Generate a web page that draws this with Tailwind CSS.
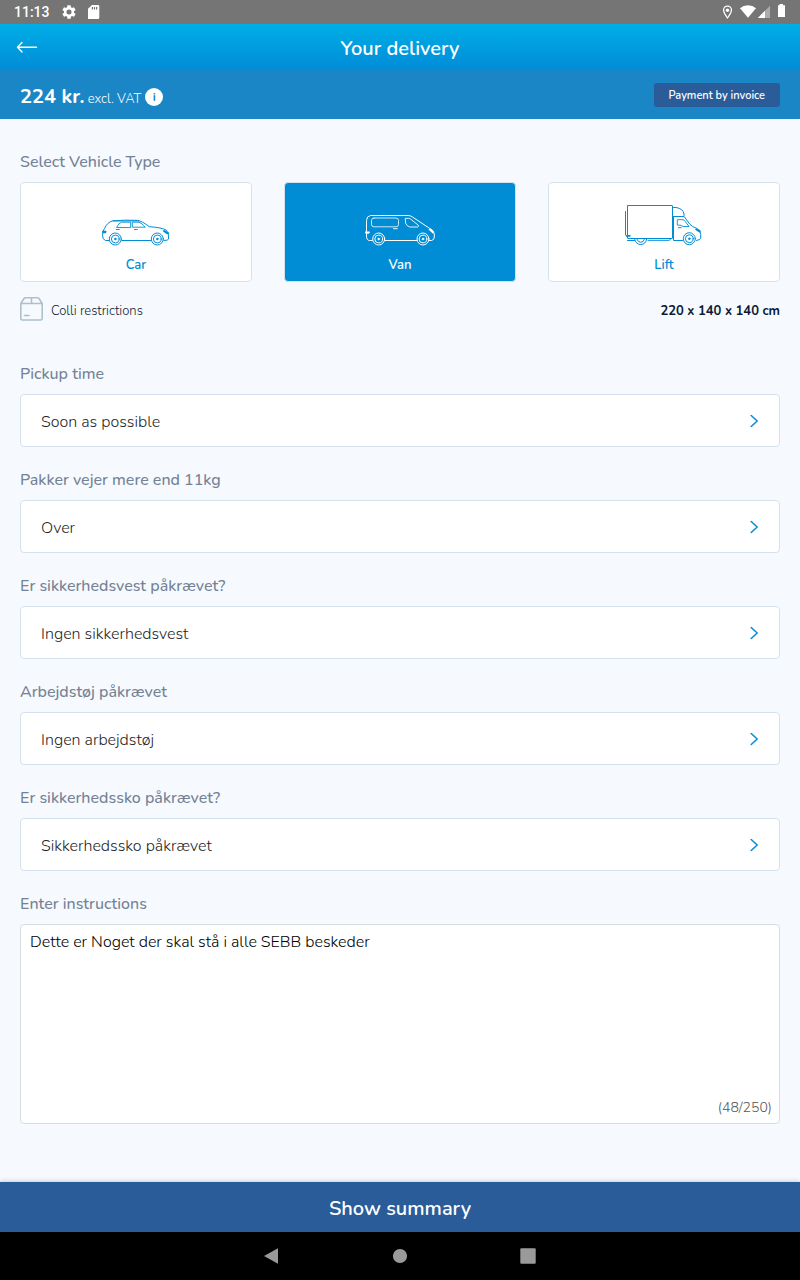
<!DOCTYPE html>
<html lang="en">
<head>
  <meta charset="UTF-8" />
  <meta name="viewport" content="width=device-width, initial-scale=1" />
  <title>Your delivery</title>
  <script src="https://cdn.jsdelivr.net/npm/@tailwindcss/browser@4"></script>
</head>
<body class="bg-[#f6faff] font-['Nunito','Lato',sans-serif] min-h-screen flex flex-col">

  <!-- System status bar -->
  <div class="h-6 bg-[#757575] text-white flex items-center justify-between pl-3.5 pr-3">
    <div class="flex items-center gap-3">
      <span class="font-['Roboto',sans-serif] font-medium text-sm leading-6">11:13</span>
      <svg class="size-3.5" viewBox="2 2 20 20" fill="currentColor"><path d="M19.14 12.94c.04-.3.06-.61.06-.94s-.02-.64-.07-.94l2.03-1.58a.49.49 0 0 0 .12-.61l-1.92-3.32a.49.49 0 0 0-.59-.22l-2.39.96a7 7 0 0 0-1.62-.94l-.36-2.54a.48.48 0 0 0-.48-.41h-3.84a.48.48 0 0 0-.47.41l-.36 2.54c-.59.24-1.13.57-1.62.94l-2.39-.96a.48.48 0 0 0-.59.22L2.74 8.87a.48.48 0 0 0 .12.61l2.03 1.58a6 6 0 0 0 0 1.88l-2.03 1.58a.49.49 0 0 0-.12.61l1.92 3.32c.12.22.37.29.59.22l2.39-.96c.5.38 1.03.7 1.62.94l.36 2.54c.05.24.24.41.48.41h3.84c.24 0 .44-.17.47-.41l.36-2.54a7 7 0 0 0 1.62-.94l2.39.96c.22.08.47 0 .59-.22l1.92-3.32a.47.47 0 0 0-.12-.61zM12 15.6a3.6 3.6 0 1 1 0-7.2 3.6 3.6 0 0 1 0 7.2z"/></svg>
      <svg class="w-3 h-4" viewBox="0 0 12 16" fill="currentColor"><path fill-rule="evenodd" d="M4 1h6a1.300 1.300 0 0 1 1.300 1.300v11.400a1.300 1.300 0 0 1-1.300 1.300H.8a1.300 1.300 0 0 1-1.300-1.300V5.300zM3.800 3v2.500h1.200V3zM5.900 3v2.500h1.200V3zM8 3v2.500h1.200V3z"/></svg>
    </div>
    <svg class="w-[68px] h-6" viewBox="720 0 68 24" fill="currentColor">
      <path fill-rule="evenodd" d="M727.500 5.500a4.600 4.600 0 0 0-4.600 4.600c0 3.400 4.600 8.900 4.600 8.900s4.600-5.500 4.600-8.900a4.600 4.600 0 0 0-4.600-4.600zm0 1.300a3.300 3.300 0 0 1 3.300 3.300c0 2.200-2 5.200-3.300 6.800-1.300-1.600-3.300-4.600-3.300-6.800a3.300 3.300 0 0 1 3.300-3.300z"/>
      <circle cx="727.500" cy="10.200" r="1.700"/>
      <path d="M740 8.200a12 12 0 0 1 16 0L748 17.800z"/>
      <path d="M770 5.800V18h-12.200z" opacity=".4"/>
      <path d="M765 10.800V18h-7.200z"/>
      <path d="M779.500 4h3.500v1.300h2V17h-7V5.300h1.500z"/>
    </svg>
  </div>

  <header>
    <div class="h-[46px] bg-linear-to-b from-[#00aee6] to-[#008cd8] text-white flex items-center px-4">
      <button class="w-6 h-6" aria-label="Back">
        <svg class="w-6 h-6" viewBox="0 0 24 24" fill="none" stroke="currentColor" stroke-width="1.400" stroke-linecap="round" stroke-linejoin="round"><path d="M20.500 12.300h-19M6 7.500l-4.500 4.800L6 17"/></svg>
      </button>
      <h1 class="flex-1 text-center text-xl font-semibold pr-6 pt-1">Your delivery</h1>
    </div>
    <div class="h-[49px] bg-[#1b86c6] text-white flex items-center justify-between px-5">
      <div class="flex items-center pt-1.5">
        <p class="text-[13px] leading-6 font-light"><strong class="text-xl leading-6 font-bold">224 kr.</strong> excl. VAT</p>
        <button class="ml-1 mb-0.5 size-[18px] rounded-full bg-white text-[#1b86c6] text-xs font-bold leading-none" aria-label="Price information">i</button>
      </div>
      <button class="h-6 px-[15px] pt-px rounded-[3px] bg-[#2a5c9a] text-[11px] leading-6 font-semibold">Payment by invoice</button>
    </div>
  </header>

  <main class="flex-1 px-5 pt-[31px] pb-[58px]">
    <fieldset>
      <legend class="h-6 mb-2 leading-6 text-base font-medium text-[#758295]">Select Vehicle Type</legend>
      <div class="grid grid-cols-3 gap-8">
        <label class="h-[100px] pt-[21px] flex flex-col items-center rounded border border-[#d6e1ee] bg-white text-[#008dd6] has-checked:bg-[#008dd6] has-checked:text-white cursor-pointer">
          <input type="radio" name="vehicle" value="car" class="sr-only" />
          <svg class="w-20 h-11" viewBox="0 0 80 44" fill="none" stroke="currentColor" stroke-linecap="round" stroke-linejoin="round">
            <path d="M12.700 36.500H9.500Q6.300 35.500 6.500 31Q6.500 27 8.500 24.500Q11 18.500 16.700 16.800Q30 15.700 41.500 16.400Q46 17 53.300 22.700Q66 23.500 70.500 26.300Q73 29 72.600 35Q72.300 36.500 68 36.500M25.700 36.500H55"/>
            <path d="M17 17H43M20.700 23.200q2-4.400 5-5h9v5zM36.700 18.200h6.300q3 1 6.300 5H36.700zM20.300 25.500h3M38.300 25.500h3" stroke-width=".9"/>
            <path d="M6.800 27.500h3M7 28.500h2.500M67.500 27l3.500 2.500 1.500-.5M68.500 26.800l3 2" stroke-width="1.500"/>
            <circle cx="19.300" cy="35" r="6"/><circle cx="19.300" cy="35" r="3.900"/><circle cx="19.300" cy="35" r="1" fill="currentColor" stroke-width=".5"/>
            <circle cx="61.300" cy="35" r="6"/><circle cx="61.300" cy="35" r="3.900"/><circle cx="61.300" cy="35" r="1" fill="currentColor" stroke-width=".5"/>
          </svg>
          <span class="mt-[7px] text-[13px] leading-5 font-semibold">Car</span>
        </label>
        <label class="h-[100px] pt-[21px] flex flex-col items-center rounded border border-[#d6e1ee] bg-white text-[#008dd6] has-checked:bg-[#008dd6] has-checked:text-white cursor-pointer">
          <input type="radio" name="vehicle" value="van" class="sr-only" checked />
          <svg class="w-20 h-11" viewBox="0 0 80 44" fill="none" stroke="currentColor" stroke-linecap="round" stroke-linejoin="round">
            <path d="M12.300 36.500H9.500Q6.500 36.300 6.500 32V16.500Q6.700 12 10.500 11.500H48.300Q50.500 11.500 52.500 13L69.500 24.300Q74.300 26.500 74.300 30V33Q74.300 36 71.500 36.500H69.300M25 36.500H56.700"/>
            <rect x="11.500" y="14" width="27" height="8.800" rx="2.500" stroke-width=".8"/>
            <path d="M45.700 14.300h3q1 0 2 .8l7.500 6q1 1.500-.5 1.900h-8q-3-.8-4-3.500zM33.500 24.700h3.800" stroke-width=".9"/>
            <path d="M5.700 28.300h3.500M6 29h2.500M69.500 25.500l3.500 3.200M70.500 25.200l2 2" stroke-width="1.500"/>
            <circle cx="18.700" cy="35" r="6"/><circle cx="18.700" cy="35" r="3.900"/><circle cx="18.700" cy="35" r="1" fill="currentColor" stroke-width=".5"/>
            <circle cx="63" cy="35" r="6"/><circle cx="63" cy="35" r="3.900"/><circle cx="63" cy="35" r="1" fill="currentColor" stroke-width=".5"/>
          </svg>
          <span class="mt-[7px] text-[13px] leading-5 font-semibold">Van</span>
        </label>
        <label class="h-[100px] pt-[21px] flex flex-col items-center rounded border border-[#d6e1ee] bg-white text-[#008dd6] has-checked:bg-[#008dd6] has-checked:text-white cursor-pointer">
          <input type="radio" name="vehicle" value="lift" class="sr-only" />
          <svg class="w-20 h-11" viewBox="0 0 80 44" fill="none" stroke="currentColor" stroke-linecap="round" stroke-linejoin="round">
            <rect x="3.500" y="1.500" width="45" height="33" rx=".5"/>
            <path d="M1.500 7.500V31M2.500 31.500h3.500M2.500 32.300h3.500M10.700 35q1 5.500 6 5.500t6-5.500M12.900 35q.8 3.300 3.800 3.300t3.800-3.300M3.500 36.500h7M24 36.300h21.500l1-1.500"/>
            <path d="M49.500 3.500h2.500Q59 4.500 60 10v2.500H49.500M49.500 12.500V36.500H58.500M60.500 13l5.500 7.500q2 2 7 4 3.700 2 3.700 6v3.500q-.3 2-4.200 2.500"/>
            <path d="M53.700 15.700h5.300q1 0 2 1.500l4 5.300h-6q-1-1.500-5.300-1.500zM54.300 23.700h3" stroke-width=".9"/>
            <path d="M72 25.300l3.700 2.500M73 25.300l3 1.500" stroke-width="1.500"/>
            <circle cx="65.300" cy="34.700" r="6"/><circle cx="65.300" cy="34.700" r="3.900"/><circle cx="65.300" cy="34.700" r="1" fill="currentColor" stroke-width=".5"/>
          </svg>
          <span class="mt-[7px] text-[13px] leading-5 font-semibold">Lift</span>
        </label>
      </div>
    </fieldset>

    <div class="mt-[15px] h-6 flex items-center text-[#0b1c36] text-[13px]">
      <svg class="w-6 h-6 mr-[7px]" viewBox="0 0 24 24" fill="none" stroke="#adc0cb" stroke-width="1.600" stroke-linejoin="round" stroke-linecap="round"><path d="M.8 6.500v15q0 1.500 1.500 1.500h18.400q1.500 0 1.500-1.500v-15zM.8 6.500L4 1.500q.5-.7 1.300-.7h12.400q.8 0 1.300.7l3.200 5M11.500.8v5.700M4.500 18.500h4.500"/></svg>
      <span class="flex-1 pt-1 leading-5 font-light">Colli restrictions</span>
      <span class="pt-1 leading-5 font-bold">220 x 140 x 140 cm</span>
    </div>

    <div class="mt-[41px] space-y-[21px]">
      <div>
        <label for="pickup" class="block mb-2 text-base font-medium text-[#758295]">Pickup time</label>
        <button id="pickup" class="w-full h-[53px] px-5 flex items-center justify-between rounded border border-[#d6e1ee] bg-white text-base font-light text-[#1f1f1f]">
          <span class="pt-0.5">Soon as possible</span>
          <svg class="w-2.5 h-4" viewBox="0 0 10 16" fill="none" stroke="#0a8ed8" stroke-width="1.600" stroke-linecap="round" stroke-linejoin="round"><path d="M2.200 2.500l6 5.500-6 5.500"/></svg>
        </button>
      </div>
      <div>
        <label for="weight" class="block mb-2 text-base font-medium text-[#758295]">Pakker vejer mere end 11kg</label>
        <button id="weight" class="w-full h-[53px] px-5 flex items-center justify-between rounded border border-[#d6e1ee] bg-white text-base font-light text-[#1f1f1f]">
          <span class="pt-0.5">Over</span>
          <svg class="w-2.5 h-4" viewBox="0 0 10 16" fill="none" stroke="#0a8ed8" stroke-width="1.600" stroke-linecap="round" stroke-linejoin="round"><path d="M2.200 2.500l6 5.500-6 5.500"/></svg>
        </button>
      </div>
      <div>
        <label for="vest" class="block mb-2 text-base font-medium text-[#758295]">Er sikkerhedsvest påkrævet?</label>
        <button id="vest" class="w-full h-[53px] px-5 flex items-center justify-between rounded border border-[#d6e1ee] bg-white text-base font-light text-[#1f1f1f]">
          <span class="pt-0.5">Ingen sikkerhedsvest</span>
          <svg class="w-2.5 h-4" viewBox="0 0 10 16" fill="none" stroke="#0a8ed8" stroke-width="1.600" stroke-linecap="round" stroke-linejoin="round"><path d="M2.200 2.500l6 5.500-6 5.500"/></svg>
        </button>
      </div>
      <div>
        <label for="workwear" class="block mb-2 text-base font-medium text-[#758295]">Arbejdstøj påkrævet</label>
        <button id="workwear" class="w-full h-[53px] px-5 flex items-center justify-between rounded border border-[#d6e1ee] bg-white text-base font-light text-[#1f1f1f]">
          <span class="pt-0.5">Ingen arbejdstøj</span>
          <svg class="w-2.5 h-4" viewBox="0 0 10 16" fill="none" stroke="#0a8ed8" stroke-width="1.600" stroke-linecap="round" stroke-linejoin="round"><path d="M2.200 2.500l6 5.500-6 5.500"/></svg>
        </button>
      </div>
      <div>
        <label for="shoes" class="block mb-2 text-base font-medium text-[#758295]">Er sikkerhedssko påkrævet?</label>
        <button id="shoes" class="w-full h-[53px] px-5 flex items-center justify-between rounded border border-[#d6e1ee] bg-white text-base font-light text-[#1f1f1f]">
          <span class="pt-0.5">Sikkerhedssko påkrævet</span>
          <svg class="w-2.5 h-4" viewBox="0 0 10 16" fill="none" stroke="#0a8ed8" stroke-width="1.600" stroke-linecap="round" stroke-linejoin="round"><path d="M2.200 2.500l6 5.500-6 5.500"/></svg>
        </button>
      </div>
      <div>
        <label for="instructions" class="block mb-2 text-base font-medium text-[#758295]">Enter instructions</label>
        <div class="relative">
          <textarea id="instructions" maxlength="250" oninput="updateCount()" class="block w-full h-[200px] px-[9px] py-[5px] resize-none rounded border border-[#d9dce1] bg-white text-base font-light text-black">Dette er Noget der skal stå i alle SEBB beskeder</textarea>
          <span id="count" class="absolute right-2 bottom-1.5 text-sm font-light text-[#555555]">(48/250)</span>
        </div>
      </div>
    </div>
  </main>

  <button class="h-[50px] w-full pt-1 bg-[#2a5c9a] text-white text-xl font-semibold shadow-[0_-1px_4px_rgba(0,0,0,0.18)]">Show summary</button>

  <!-- System navigation -->
  <nav class="h-12 bg-black text-[#9a9a9a] flex items-center justify-center gap-28">
    <button class="size-4" aria-label="Back"><svg class="size-4" viewBox="0 0 16 16" fill="currentColor"><path d="M14 .3v15.400L0 8z"/></svg></button>
    <button class="size-4" aria-label="Home"><svg class="size-4" viewBox="0 0 16 16" fill="currentColor"><circle cx="8" cy="8" r="7.100"/></svg></button>
    <button class="size-4" aria-label="Recent apps"><svg class="size-4" viewBox="0 0 16 16" fill="currentColor"><rect x=".3" y=".3" width="15.400" height="15.400" rx="1"/></svg></button>
  </nav>

  <script>
    function updateCount() {
      const text = document.getElementById("instructions").value;
      document.getElementById("count").textContent = `(${text.length}/250)`;
    }
  </script>
</body>
</html>
